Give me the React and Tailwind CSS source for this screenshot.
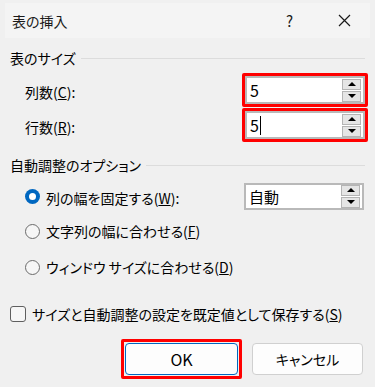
import React from "react";

const font = { fontFamily: '"Noto Sans CJK JP", "Noto Sans", sans-serif' };

function Spinner() {
  return (
    <div className="flex flex-col gap-[1px] mr-[2px]">
      <div className="w-[19px] h-[11px] bg-[#e5e5e5] border border-[#b4b4b4] flex items-center justify-center">
        <div className="w-0 h-0 border-l-[4px] border-r-[4px] border-b-[4px] border-l-transparent border-r-transparent border-b-black" />
      </div>
      <div className="w-[19px] h-[11px] bg-[#e5e5e5] border border-[#b4b4b4] flex items-center justify-center">
        <div className="w-0 h-0 border-l-[4px] border-r-[4px] border-t-[4px] border-l-transparent border-r-transparent border-t-black" />
      </div>
    </div>
  );
}

function SpinInput({ value, caret }) {
  return (
    <div className="w-[120px] h-[28px] bg-white border-2 border-[#b9b9b9] flex items-center justify-between">
      <div className="pl-[3px] text-[16px] leading-none flex items-center">
        <span>{value}</span>
        {caret && <span className="inline-block w-[1px] h-[19px] bg-black ml-[1px]" />}
      </div>
      <Spinner />
    </div>
  );
}

function Radio({ checked }) {
  if (checked)
    return (
      <div className="w-[15px] h-[15px] rounded-full bg-[#0067c0] flex items-center justify-center">
        <div className="w-[7px] h-[7px] rounded-full bg-white" />
      </div>
    );
  return <div className="w-[15px] h-[15px] rounded-full border border-[#6b6b6b] bg-[#f6f6f6]" />;
}

export default function App() {
  return (
    <div
      className="w-[375px] h-[387px] bg-[#f0f0f0] text-black text-[14px] leading-none overflow-hidden [font-feature-settings:'palt']"
      style={font}
    >
      {/* title bar */}
      <div className="mx-[5px] mt-[3px] h-[35px] bg-[#f4f4f4] flex items-center">
        <span className="ml-[7px] text-[14px] text-[#1a1a1a]">表の挿入</span>
        <span className="ml-auto mr-[45px] text-[15px] text-[#1a1a1a]">?</span>
        <svg className="mr-[19px]" width="13" height="13" viewBox="0 0 13 13">
          <path d="M1 1 L12 12 M12 1 L1 12" stroke="#1a1a1a" strokeWidth="1.2" />
        </svg>
      </div>

      {/* section 1 */}
      <div className="mt-[10px] h-[20px] flex items-center pl-[10px] pr-[10px]">
        <span>表のサイズ</span>
        <div className="flex-1 ml-[5px] h-[1px] bg-[#dcdcdc]" />
      </div>

      <div className="mt-[5px] flex items-center pl-[25px] pr-[7px]">
        <span className="mt-[3px]">
          列数(<span className="underline">C</span>):
        </span>
        <div className="ml-auto border-[3px] border-[#ff0000] rounded-[2px]">
          <SpinInput value="5" />
        </div>
      </div>
      <div className="mt-[1px] flex items-center pl-[25px] pr-[7px]">
        <span className="mt-[3px]">
          行数(<span className="underline">R</span>):
        </span>
        <div className="ml-auto border-[3px] border-[#ff0000] rounded-[2px]">
          <SpinInput value="5" caret />
        </div>
      </div>

      {/* section 2 */}
      <div className="mt-[13px] h-[20px] flex items-center pl-[10px] pr-[10px]">
        <span>自動調整のオプション</span>
        <div className="flex-1 ml-[5px] h-[1px] bg-[#dcdcdc]" />
      </div>

      <div className="mt-[8px] h-[26px] flex items-center pl-[25px] pr-[11px]">
        <Radio checked />
        <span className="ml-[6px] mt-[3px]">
          列の幅を固定する(<span className="underline">W</span>):
        </span>
        <div className="ml-auto w-[120px] h-[27px] bg-white border-2 border-[#b9b9b9] flex items-center justify-between">
          <span className="pl-[3px] text-[15px]">自動</span>
          <Spinner />
        </div>
      </div>

      <div className="mt-[12px] h-[20px] flex items-center pl-[25px]">
        <Radio />
        <span className="ml-[6px]">
          文字列の幅に合わせる(<span className="underline">F</span>)
        </span>
      </div>

      <div className="mt-[16px] h-[20px] flex items-center pl-[25px]">
        <Radio />
        <span className="ml-[6px]">
          ウィンドウ サイズに合わせる(<span className="underline">D</span>)
        </span>
      </div>

      <div className="mt-[27px] h-[20px] flex items-center pl-[10px]">
        <div className="w-[16px] h-[16px] rounded-[3px] border border-[#5f5f5f] bg-[#f6f6f6]" />
        <span className="ml-[6px]">
          サイズと自動調整の設定を既定値として保存する(<span className="underline">S</span>)
        </span>
      </div>

      {/* buttons */}
      <div className="mt-[15px] flex items-center pl-[121px]">
        <div className="border-[3px] border-[#ff0000] rounded-[2px] p-[1px]">
          <div className="w-[113px] h-[32px] bg-[#fdfdfd] border border-[#0067c0] rounded-[4px] flex items-center justify-center text-[16px]">
            OK
          </div>
        </div>
        <div className="ml-[10px] w-[111px] h-[32px] bg-[#fdfdfd] border border-[#d0d0d0] rounded-[4px] flex items-center justify-center text-[14px]">
          キャンセル
        </div>
      </div>
    </div>
  );
}
